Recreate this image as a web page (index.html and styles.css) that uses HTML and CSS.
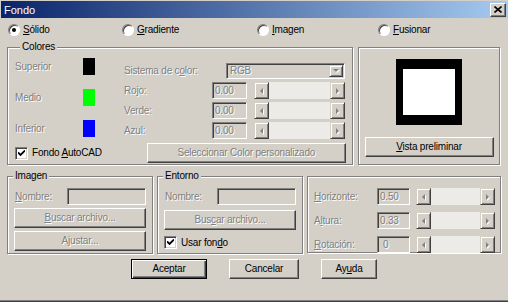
FILE: index.html
```html
<!DOCTYPE html>
<html lang="es">
<head>
  <meta charset="UTF-8">
  <title>Fondo</title>
  <link rel="stylesheet" href="styles.css">
</head>
<body>
  <div class="dialog">
    <div class="titlebar">
      <span class="title">Fondo</span>
      <span class="close">
        <svg width="8" height="7" viewBox="0 0 8 7"><path d="M0.5 0.5 L7.5 6.5 M7.5 0.5 L0.5 6.5" stroke="#000" stroke-width="1.6" fill="none"/></svg>
      </span>
    </div>

    <div class="content">
      <!-- tipo de fondo -->
      <div class="modes">
        <label class="opt opt-solid"><span class="radio on"></span><span><u>S</u>ólido</span></label>
        <label class="opt opt-grad"><span class="radio"></span><span><u>G</u>radiente</span></label>
        <label class="opt opt-img"><span class="radio"></span><span><u>I</u>magen</span></label>
        <label class="opt"><span class="radio"></span><span><u>F</u>usionar</span></label>
      </div>

      <div class="top-row">
        <fieldset class="group colores">
          <legend>Colores</legend>
          <div class="colores-main">
            <div class="swatches">
              <div class="swatch-row"><span class="lbl dis">Superior</span><span class="swatch black"></span></div>
              <div class="swatch-row"><span class="lbl dis">Medio</span><span class="swatch green"></span></div>
              <div class="swatch-row"><span class="lbl dis">Inferior</span><span class="swatch blue"></span></div>
            </div>
            <div class="color-system">
              <div class="field-row">
                <span class="lbl dis lbl-system">Sistema de c<u>o</u>lor:</span>
                <div class="combo">
                  <span class="combo-text dis">RGB</span>
                  <span class="combo-btn"><i class="tri down"></i></span>
                </div>
              </div>
              <div class="field-row">
                <span class="lbl dis lbl-rgb">Rojo:</span>
                <span class="edit dis">0.00</span>
                <div class="hscroll"><span class="sb-btn"><i class="tri left"></i></span><span class="sb-track"></span><span class="sb-btn"><i class="tri right"></i></span></div>
              </div>
              <div class="field-row">
                <span class="lbl dis lbl-rgb">Verde:</span>
                <span class="edit dis">0.00</span>
                <div class="hscroll"><span class="sb-btn"><i class="tri left"></i></span><span class="sb-track"></span><span class="sb-btn"><i class="tri right"></i></span></div>
              </div>
              <div class="field-row">
                <span class="lbl dis lbl-rgb">Azul:</span>
                <span class="edit dis">0.00</span>
                <div class="hscroll"><span class="sb-btn"><i class="tri left"></i></span><span class="sb-track"></span><span class="sb-btn"><i class="tri right"></i></span></div>
              </div>
            </div>
          </div>
          <div class="colores-foot">
            <label class="check-item check-autocad">
              <span class="check"><svg width="7" height="7" viewBox="0 0 7 7"><path d="M0 2.5 L2.5 5 L7 0.5" stroke="#000" stroke-width="1.8" fill="none"/></svg></span>
              <span>Fondo <u>A</u>utoCAD</span>
            </label>
            <button class="btn btn-custom dis">Seleccionar Color personalizado</button>
          </div>
        </fieldset>

        <div class="panel preview">
          <div class="preview-frame"></div>
          <button class="btn btn-preview"><u>V</u>ista preliminar</button>
        </div>
      </div>

      <div class="bottom-row">
        <fieldset class="group small">
          <legend>Imagen</legend>
          <div class="name-row">
            <span class="lbl dis lbl-name"><u>N</u>ombre:</span>
            <span class="edit edit-name"></span>
          </div>
          <button class="btn btn-file dis"><u>B</u>uscar archivo...</button>
          <button class="btn btn-file btn-adjust dis">A<u>j</u>ustar...</button>
        </fieldset>

        <fieldset class="group small">
          <legend>Entorno</legend>
          <div class="name-row">
            <span class="lbl dis lbl-name">Nombre:</span>
            <span class="edit edit-name"></span>
          </div>
          <button class="btn btn-file btn-env dis">Bus<u>c</u>ar archivo...</button>
          <label class="check-item check-env">
            <span class="check"><svg width="7" height="7" viewBox="0 0 7 7"><path d="M0 2.5 L2.5 5 L7 0.5" stroke="#000" stroke-width="1.8" fill="none"/></svg></span>
            <span>Usar fon<u>d</u>o</span>
          </label>
        </fieldset>

        <div class="panel horizon">
          <div class="field-row">
            <span class="lbl dis lbl-horizon"><u>H</u>orizonte:</span>
            <span class="edit edit-small dis">0.50</span>
            <div class="hscroll hscroll-small"><span class="sb-btn"><i class="tri left"></i></span><span class="sb-track"></span><span class="sb-btn"><i class="tri right"></i></span></div>
          </div>
          <div class="field-row">
            <span class="lbl dis lbl-horizon">A<u>l</u>tura:</span>
            <span class="edit edit-small dis">0.33</span>
            <div class="hscroll hscroll-small"><span class="sb-btn"><i class="tri left"></i></span><span class="sb-track"></span><span class="sb-btn"><i class="tri right"></i></span></div>
          </div>
          <div class="field-row">
            <span class="lbl dis lbl-horizon"><u>R</u>otación:</span>
            <span class="edit edit-small edit-angle dis">0</span>
            <div class="hscroll hscroll-small"><span class="sb-btn"><i class="tri left"></i></span><span class="sb-track"></span><span class="sb-btn"><i class="tri right"></i></span></div>
          </div>
        </div>
      </div>

      <div class="actions">
        <button class="btn btn-default btn-ok">Aceptar</button>
        <button class="btn btn-cancel">Cancelar</button>
        <button class="btn btn-help">Ay<u>u</u>da</button>
      </div>
    </div>
  </div>
</body>
</html>
```

FILE: styles.css
```css
/* Classic Windows dialog look */
body {
  margin: 0;
  font-family: 'Liberation Sans', Arial, sans-serif;
  font-size: 10px;
  letter-spacing: -0.2px;
  line-height: 12px;
  color: #000;
}

u {
  text-decoration: underline;
  text-underline-offset: 1px;
}

.dialog {
  width: 508px;
  height: 302px;
  box-sizing: border-box;
  background: #d4d0c8;
  box-shadow: inset 0 -1px #404040, inset 0 -2px #808080;
  overflow: hidden;
}

.titlebar {
  display: flex;
  align-items: center;
  justify-content: space-between;
  height: 17px;
  margin: 1px 0 0 1px;
  padding-left: 3px;
  background: linear-gradient(to right, #0a246a, #a6caf0);
  color: #fff;
  font-size: 11px;
  letter-spacing: 0;
}

.close {
  display: flex;
  align-items: center;
  justify-content: center;
  width: 16px;
  height: 14px;
  margin-right: 2px;
  box-sizing: border-box;
  background: #d4d0c8;
  border: 1px solid;
  border-color: #fff #404040 #404040 #fff;
  box-shadow: inset -1px -1px #808080;
}

.content {
  padding-left: 7px;
}

/* disabled text */
.dis {
  color: #808080;
  text-shadow: 1px 1px 0 #fff;
}

/* radio buttons */
.modes {
  display: flex;
  align-items: center;
  height: 14px;
  margin-top: 5px;
  padding-left: 1px;
}

.opt {
  display: flex;
  align-items: center;
}

.opt-solid { width: 114px; }
.opt-grad { width: 135px; }
.opt-img { width: 121px; }

.radio {
  display: flex;
  align-items: center;
  justify-content: center;
  width: 12px;
  height: 12px;
  margin-right: 3px;
  box-sizing: border-box;
  border-radius: 50%;
  border: 1px solid;
  border-color: #808080 #fff #fff #808080;
  background: #fff;
  box-shadow: inset 1px 1px #404040;
}

.radio.on::after {
  content: '';
  width: 4px;
  height: 4px;
  border-radius: 50%;
  background: #000;
}

/* group boxes */
.group {
  margin: 0;
  padding: 0;
  min-width: 0;
  box-sizing: border-box;
  border: 1px solid #808080;
  box-shadow: inset 1px 1px #fff, 1px 1px #fff;
}

.group legend {
  margin-left: 5px;
  padding: 0 2px;
  line-height: 12px;
  background: #d4d0c8;
}

.panel {
  box-sizing: border-box;
  border: 1px solid #808080;
  box-shadow: inset 1px 1px #fff, 1px 1px #fff;
}

.top-row {
  display: flex;
  align-items: flex-start;
  margin-top: 4px;
}

.colores {
  width: 346px;
  height: 124px;
  padding: 0 6px 1px 7px;
}

.colores-main {
  display: flex;
  align-items: flex-start;
  padding-top: 5px;
}

.swatches {
  display: flex;
  flex-direction: column;
  gap: 14px;
  width: 109px;
}

.swatch-row {
  display: flex;
  align-items: center;
  height: 17px;
}

.swatch-row .lbl {
  width: 68px;
}

.swatch {
  width: 12px;
  height: 17px;
}

.swatch.black { background: #000; }
.swatch.green { background: #00ff00; }
.swatch.blue { background: #0000ff; }

.color-system {
  display: flex;
  flex-direction: column;
  gap: 3px;
  margin-top: 4px;
  width: 221px;
}

.field-row {
  display: flex;
  align-items: center;
  height: 17px;
}

.lbl-system { width: 102px; }
.lbl-rgb { width: 88px; }

/* sunken fields */
.combo,
.edit {
  box-sizing: border-box;
  border: 1px solid;
  border-color: #808080 #fff #fff #808080;
  box-shadow: inset 1px 1px #404040, inset -1px -1px #d4d0c8;
  background: #d4d0c8;
}

.combo {
  display: flex;
  align-items: center;
  justify-content: space-between;
  width: 119px;
  height: 16px;
  padding: 1px;
}

.combo-text {
  padding-left: 2px;
}

.combo-btn {
  display: flex;
  align-items: center;
  justify-content: center;
  width: 14px;
  height: 12px;
  box-sizing: border-box;
  border: 1px solid;
  border-color: #d4d0c8 #404040 #404040 #d4d0c8;
  box-shadow: inset 1px 1px #fff, inset -1px -1px #808080;
}

.edit {
  display: flex;
  align-items: center;
  width: 35px;
  height: 17px;
  padding-left: 2px;
}

/* scroll bars */
.hscroll {
  display: flex;
  width: 91px;
  height: 17px;
  margin-left: 7px;
}

.sb-btn {
  display: flex;
  align-items: center;
  justify-content: center;
  width: 15px;
  box-sizing: border-box;
  border: 1px solid;
  border-color: #d4d0c8 #404040 #404040 #d4d0c8;
  box-shadow: inset 1px 1px #fff, inset -1px -1px #808080;
}

.sb-track {
  flex: 1;
  background: #ecebe7;
}

.tri {
  width: 0;
  height: 0;
  border-style: solid;
  filter: drop-shadow(1px 1px 0 #fff);
}

.tri.left {
  border-width: 3px 3px 3px 0;
  border-color: transparent #808080 transparent transparent;
}

.tri.right {
  border-width: 3px 0 3px 3px;
  border-color: transparent transparent transparent #808080;
}

.tri.down {
  border-width: 3px 3px 0 3px;
  border-color: #808080 transparent transparent transparent;
}

/* check boxes */
.check-item {
  display: flex;
  align-items: center;
}

.check {
  display: flex;
  align-items: center;
  justify-content: center;
  width: 13px;
  height: 13px;
  margin-right: 4px;
  box-sizing: border-box;
  border: 1px solid;
  border-color: #808080 #fff #fff #808080;
  box-shadow: inset 1px 1px #404040, inset -1px -1px #d4d0c8;
  background: #fff;
}

.colores-foot {
  display: flex;
  align-items: center;
  margin-top: 4px;
}

.check-autocad {
  width: 132px;
}

/* push buttons */
.btn {
  display: block;
  height: 20px;
  padding: 0;
  box-sizing: border-box;
  font: inherit;
  letter-spacing: inherit;
  color: #000;
  background: #d4d0c8;
  border: 1px solid;
  border-color: #fff #404040 #404040 #fff;
  box-shadow: inset -1px -1px #808080;
}

.btn.dis {
  color: #808080;
}

.btn-default {
  border-color: #000;
  box-shadow: inset 1px 1px #fff, inset -1px -1px #404040, inset -2px -2px #808080;
}

.btn-custom { width: 200px; }

.preview {
  width: 142px;
  height: 118px;
  margin: 6px 0 0 5px;
  padding-top: 11px;
}

.preview-frame {
  width: 66px;
  height: 66px;
  margin: 0 auto;
  box-sizing: border-box;
  border-style: solid;
  border-color: #000;
  border-width: 10px 7px;
  background: #fff;
}

.btn-preview {
  width: 129px;
  margin: 12px auto 0;
}

/* lower groups */
.bottom-row {
  display: flex;
  align-items: flex-start;
  gap: 4px;
  height: 84px;
  margin-top: 5px;
}

.small {
  width: 146px;
  height: 84px;
  padding: 6px 6px 0;
}

.small legend {
  margin-left: -1px;
}

.name-row {
  display: flex;
  align-items: center;
  height: 17px;
}

.lbl-name {
  width: 52px;
  padding-left: 1px;
}

.edit-name {
  width: 79px;
}

.btn-file {
  width: 132px;
  margin-top: 3px;
}

.btn-env {
  margin-top: 5px;
}

.check-env {
  margin-top: 6px;
}

.horizon {
  width: 194px;
  height: 77px;
  margin-top: 6px;
  padding: 11px 0 0 6px;
  display: flex;
  flex-direction: column;
  gap: 7px;
}

.lbl-horizon { width: 63px; }

.edit-small { width: 33px; }
.edit-angle { padding-left: 5px; }

.hscroll-small {
  width: 79px;
  margin-left: 6px;
}

.actions {
  display: flex;
  gap: 22px;
  margin-top: 5px;
  padding-left: 124px;
}

.btn-ok { width: 76px; }
.btn-cancel { width: 70px; }
.btn-help { width: 56px; }
```
